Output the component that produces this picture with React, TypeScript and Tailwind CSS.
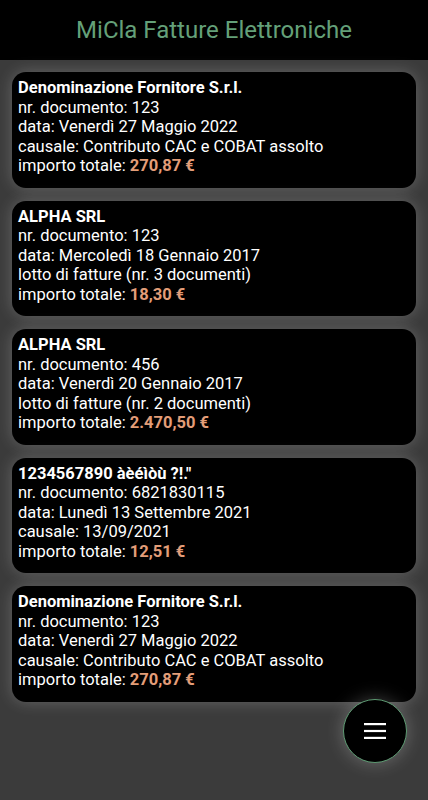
type Invoice = {
  supplier: string;
  number: string;
  date: string;
  detail: string;
  total: string;
};

const invoices: Invoice[] = [
  {
    supplier: "Denominazione Fornitore S.r.l.",
    number: "123",
    date: "Venerdì 27 Maggio 2022",
    detail: "causale: Contributo CAC e COBAT assolto",
    total: "270,87 €",
  },
  {
    supplier: "ALPHA SRL",
    number: "123",
    date: "Mercoledì 18 Gennaio 2017",
    detail: "lotto di fatture (nr. 3 documenti)",
    total: "18,30 €",
  },
  {
    supplier: "ALPHA SRL",
    number: "456",
    date: "Venerdì 20 Gennaio 2017",
    detail: "lotto di fatture (nr. 2 documenti)",
    total: "2.470,50 €",
  },
  {
    supplier: "1234567890 àèéìòù ?!.\"",
    number: "6821830115",
    date: "Lunedì 13 Settembre 2021",
    detail: "causale: 13/09/2021",
    total: "12,51 €",
  },
  {
    supplier: "Denominazione Fornitore S.r.l.",
    number: "123",
    date: "Venerdì 27 Maggio 2022",
    detail: "causale: Contributo CAC e COBAT assolto",
    total: "270,87 €",
  },
];

function InvoiceCard({ invoice }: { invoice: Invoice }) {
  return (
    <div className="rounded-[14px] bg-black px-[6px] pb-[12px] pt-[6px] text-[16.5px] leading-[19.5px] text-white shadow-[0_0_16px_rgba(255,255,255,0.22)]">
      <div className="font-bold">{invoice.supplier}</div>
      <div>nr. documento: {invoice.number}</div>
      <div>data: {invoice.date}</div>
      <div>{invoice.detail}</div>
      <div>
        importo totale:{" "}
        <span className="font-bold text-[#e39d78]">{invoice.total}</span>
      </div>
    </div>
  );
}

function HamburgerIcon() {
  return (
    <svg width="22" height="16" viewBox="0 0 22 16" fill="white" aria-hidden="true">
      <rect x="0" y="0" width="22" height="2.2" />
      <rect x="0" y="6.9" width="22" height="2.2" />
      <rect x="0" y="13.8" width="22" height="2.2" />
    </svg>
  );
}

export default function App() {
  return (
    <div
      className="relative flex h-[800px] w-full flex-col overflow-hidden bg-[#3b3b3b]"
      style={{ fontFamily: "Roboto, 'Noto Sans', sans-serif" }}
    >
      <header className="flex h-[60px] shrink-0 items-center justify-center bg-black">
        <h1 className="text-[24px] text-[#64a079]">MiCla Fatture Elettroniche</h1>
      </header>

      <main className="flex flex-col gap-[13px] px-[12px] pt-[12px]">
        {invoices.map((invoice, index) => (
          <InvoiceCard key={`${invoice.number}-${index}`} invoice={invoice} />
        ))}
      </main>

      <button
        type="button"
        aria-label="Menu"
        className="absolute left-[343px] top-[699px] flex h-[64px] w-[64px] items-center justify-center rounded-full border border-[#5d9a72] bg-black shadow-[0_0_18px_rgba(255,255,255,0.25)]"
      >
        <HamburgerIcon />
      </button>
    </div>
  );
}
